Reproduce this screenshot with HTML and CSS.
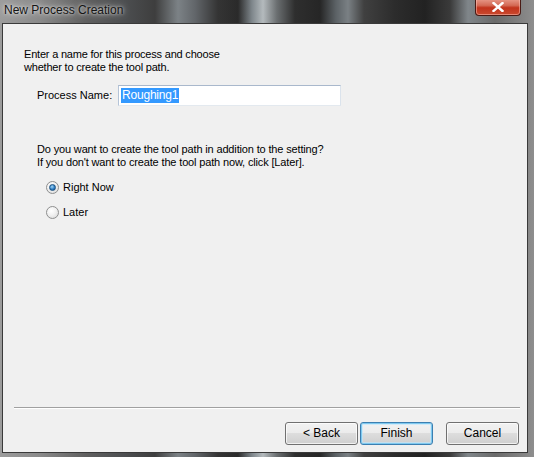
FILE: index.html
```html
<!DOCTYPE html>
<html>
<head>
<meta charset="utf-8">
<link rel="stylesheet" href="styles.css">
</head>
<body>
<div class="window">
  <div class="titlebar">
    <span class="title">New Process Creation</span>
    <div class="close">
      <svg width="12" height="10" viewBox="0 0 12 10"><path d="M1.5 1 L10.5 9 M10.5 1 L1.5 9" stroke="#fff" stroke-width="2.4" stroke-linecap="square"/></svg>
    </div>
  </div>
  <div class="client">
    <p class="intro">Enter a name for this process and choose<br>whether to create the tool path.</p>
    <div class="name-row">
      <label class="name-label">Process Name:</label>
      <div class="input"><span class="sel">Roughing1</span></div>
    </div>
    <p class="question">Do you want to create the tool path in addition to the setting?<br>If you don't want to create the tool path now, click [Later].</p>
    <div class="radios">
      <div class="radio-row"><span class="radio checked"></span><span>Right Now</span></div>
      <div class="radio-row"><span class="radio"></span><span>Later</span></div>
    </div>
    <div class="sep"></div>
    <div class="buttons">
      <div class="btn">&lt; Back</div>
      <div class="btn default">Finish</div>
      <div class="btn cancel">Cancel</div>
    </div>
  </div>
</div>
</body>
</html>
```
FILE: styles.css
```css
html, body {
  margin: 0;
  padding: 0;
}
body {
  width: 534px;
  height: 457px;
  overflow: hidden;
  font-family: "Liberation Sans", Arial, sans-serif;
  font-size: 11px;
  color: #000;
}
.window {
  width: 534px;
  height: 457px;
  display: flex;
  flex-direction: column;
  background:
    linear-gradient(90deg,
      #9c9c9c 0px, #8a8a8a 40px, #606060 85px, #4c4e50 125px, #3e3e3e 155px,
      #7c8286 178px, #62666a 195px, #343434 218px, #2a2a2a 238px,
      #7f878c 252px, #b4babd 263px, #6a6e70 277px, #2e2e2e 295px, #262626 320px,
      #5c6266 336px, #7a8084 348px, #404040 364px, #2c2c2c 395px,
      #222222 425px, #3a3a3a 450px, #80868a 468px, #6a6a6a 495px, #8e8e8e 534px);
}
.titlebar {
  height: 23px;
  flex: none;
  position: relative;
  display: flex;
  align-items: center;
}
.title {
  margin-left: 4px;
  margin-top: -4px;
  font-family: "Liberation Sans", Arial, sans-serif;
  font-size: 12px;
  color: #141414;
  text-shadow: 0 0 7px rgba(255,255,255,0.85), 0 0 3px rgba(255,255,255,0.7);
}
.close {
  position: absolute;
  left: 475px;
  top: -1px;
  width: 44px;
  height: 16px;
  border: 1px solid #4a1a14;
  border-top: none;
  border-radius: 0 0 4px 4px;
  background: linear-gradient(#e89a8a 0%, #d46a55 40%, #c2331c 55%, #c94a2f 100%);
  box-shadow: inset 0 0 0 1px rgba(255,200,190,0.5);
  display: flex;
  align-items: center;
  justify-content: center;
}
.client {
  flex: 1;
  margin: 0 6px 4px 2px;
  background: #f0f0f0;
  border: 1px solid #3a3a3a;
  display: flex;
  flex-direction: column;
  line-height: 13px;
}
.intro {
  margin: 24px 0 0 21px;
  letter-spacing: -0.2px;
}
.name-row {
  display: flex;
  align-items: center;
  margin-top: 11px;
  margin-left: 34px;
}
.name-label {
  width: 81px;
}
.input {
  width: 219px;
  height: 19px;
  background: #fff;
  border: 1px solid #abadb3;
  border-color: #a9b8cc #dbe3ec #e3e9ef #b5c4d8;
  display: flex;
  align-items: center;
  padding-left: 2px;
}
.sel {
  background: #3399ff;
  color: #fff;
  padding: 0 1px;
  line-height: 15px;
  font-size: 12px;
  letter-spacing: -0.2px;
}
.question {
  margin: 37px 0 0 34px;
  letter-spacing: -0.15px;
}
.radios {
  margin: 10px 0 0 43px;
  display: flex;
  flex-direction: column;
  gap: 8px;
}
.radio-row {
  display: flex;
  align-items: center;
  height: 17px;
  gap: 4px;
  font-size: 11px;
}
.radio {
  width: 11px;
  height: 11px;
  border-radius: 50%;
  border: 1px solid #8e8f8f;
  background: radial-gradient(circle at 40% 35%, #ffffff 0%, #f1f1f1 45%, #d4d4d4 100%);
  display: flex;
  align-items: center;
  justify-content: center;
}
.radio.checked::after {
  content: "";
  width: 5px;
  height: 5px;
  border-radius: 50%;
  background: radial-gradient(circle at 40% 35%, #a6d8f5 0%, #2d7ec5 55%, #0f4a86 100%);
  border: 1px solid #1c5180;
}
.sep {
  margin: auto 7px 0 11px;
  height: 1px;
  background: #a0a0a0;
  border-bottom: 1px solid #fff;
}
.buttons {
  display: flex;
  justify-content: flex-end;
  margin: 13px 8px 7px 0;
  gap: 2px;
}
.btn {
  width: 71px;
  height: 21px;
  border: 1px solid #707070;
  border-radius: 3px;
  background: linear-gradient(#f2f2f2 0%, #ebebeb 50%, #dddddd 50%, #cfcfcf 100%);
  box-shadow: inset 0 0 0 1px rgba(255,255,255,0.7);
  display: flex;
  align-items: center;
  justify-content: center;
  font-size: 12px;
}
.btn.default {
  border-color: #3c7fb1;
  box-shadow: inset 0 0 0 1px #7ec9ef, inset 0 0 0 2px rgba(190,230,253,0.6);
}
.btn.cancel {
  margin-left: 11px;
}
```
